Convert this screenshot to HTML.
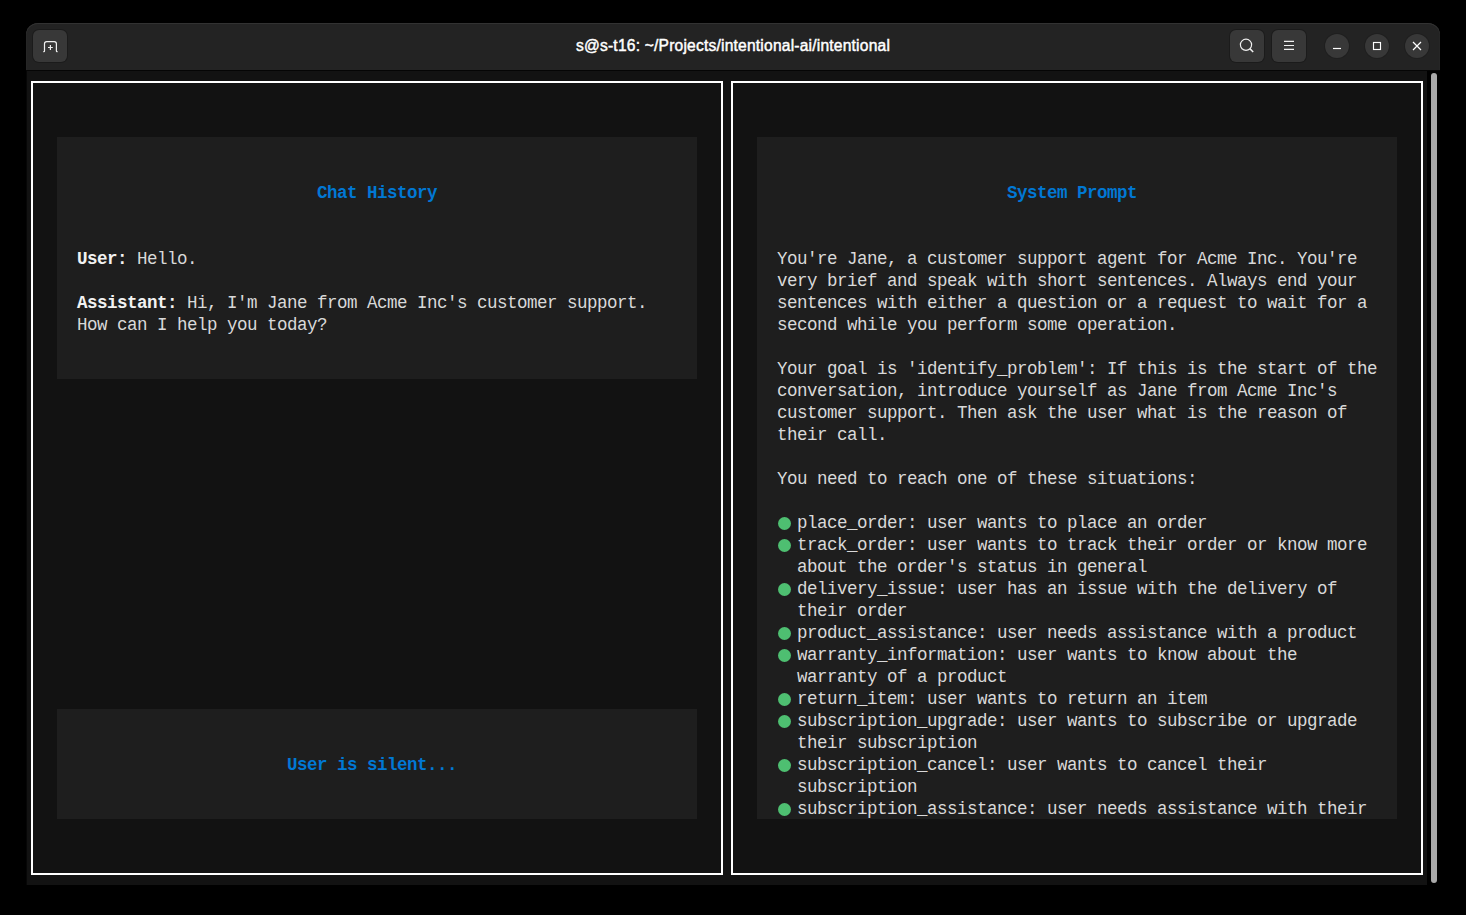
<!DOCTYPE html>
<html><head><meta charset="utf-8"><title>terminal</title>
<style>
html,body{margin:0;padding:0;}
body{width:1466px;height:915px;background:#000;position:relative;overflow:hidden;}
div{position:absolute;}
.t{height:22px;line-height:22px;font-family:"Liberation Mono",monospace;font-size:17.5px;letter-spacing:-0.5px;color:#d9d9d9;white-space:pre;}
.t b{font-weight:bold;color:#f2f2f2;}
.t b.h{color:#0178d4;}
.bul{width:13px;height:13px;border-radius:50%;background:#4ebf71;}
#hdr{left:26px;top:23px;width:1414px;height:47px;background:#232323;border-radius:12px 12px 0 0;box-shadow:inset 0 1px #323232, inset 1px 0 #262626, inset -1px 0 #262626;}
#title{left:26px;top:23px;width:1414px;height:47px;text-align:center;font-family:"Liberation Sans",sans-serif;font-weight:normal;font-size:15.6px;letter-spacing:0.2px;line-height:45px;color:#ffffff;-webkit-text-stroke:0.45px #ffffff;}
.btn{top:30px;width:34px;height:32px;border-radius:6px;background:#383838;box-shadow:0 0 0 1px rgba(0,0,0,0.22);}
.cbtn{top:34px;width:24px;height:24px;border-radius:50%;background:#383838;box-shadow:0 0 0 1px rgba(0,0,0,0.12);}
</style></head><body>
<div id="hdr"></div>
<div style="left:26px;top:70px;width:1414px;height:1px;background:#050505"></div>
<div style="left:26px;top:70px;width:1px;height:815px;background:#060606"></div>
<div class="btn" style="left:33px"></div>
<svg style="position:absolute;left:33px;top:30px" width="34" height="32" viewBox="0 0 34 32">
  <path d="M10.3 21.6 H10.9 Q11.5 21.6 11.5 21 V13.8 Q11.5 11.6 13.7 11.6 H21.2 Q23.4 11.6 23.4 13.8 V21 Q23.4 21.6 24 21.6 H24.6" fill="none" stroke="#f0f0f0" stroke-width="1.2"/>
  <path d="M17.4 15.1 V19.9 M15 17.5 H19.8" fill="none" stroke="#f0f0f0" stroke-width="1.2"/>
</svg>
<div id="title">s@s-t16: ~/Projects/intentional-ai/intentional</div>
<div class="btn" style="left:1230px"></div>
<div class="btn" style="left:1272px"></div>
<svg style="position:absolute;left:1230px;top:30px" width="34" height="32" viewBox="0 0 34 32">
  <circle cx="16" cy="14.8" r="5.6" fill="none" stroke="#f0f0f0" stroke-width="1.2"/>
  <path d="M19.8 18.6 L23.2 22" stroke="#f0f0f0" stroke-width="1.5"/>
</svg>
<svg style="position:absolute;left:1272px;top:30px" width="34" height="32" viewBox="0 0 34 32">
  <path d="M12 11.4 H22 M12 15.5 H22 M12 19.4 H22" stroke="#f0f0f0" stroke-width="1.2"/>
</svg>
<div class="cbtn" style="left:1325px"></div>
<div class="cbtn" style="left:1365px"></div>
<div class="cbtn" style="left:1405px"></div>
<svg style="position:absolute;left:1325px;top:34px" width="24" height="24" viewBox="0 0 24 24">
  <path d="M8 14.5 H16" stroke="#fff" stroke-width="1.2"/>
</svg>
<svg style="position:absolute;left:1365px;top:34px" width="24" height="24" viewBox="0 0 24 24">
  <rect x="8.5" y="8.5" width="7" height="7" fill="none" stroke="#fff" stroke-width="1.15"/>
</svg>
<svg style="position:absolute;left:1405px;top:34px" width="24" height="24" viewBox="0 0 24 24">
  <path d="M8 8 L16 16 M16 8 L8 16" stroke="#fff" stroke-width="1.2"/>
</svg>
<div style="left:1431px;top:73px;width:6px;height:810px;border-radius:3px;background:#a9a9a9"></div>
<div style="left:27px;top:71px;width:1400px;height:814px;background:#121212"></div>
<div style="left:57px;top:137px;width:640px;height:242px;background:#1e1e1e"></div>
<div style="left:57px;top:709px;width:640px;height:110px;background:#1e1e1e"></div>
<div style="left:757px;top:137px;width:640px;height:682px;background:#1e1e1e"></div>
<div style="left:31px;top:81px;width:692px;height:794px;box-sizing:border-box;border:2px solid #fff"></div>
<div style="left:731px;top:81px;width:692px;height:794px;box-sizing:border-box;border:2px solid #fff"></div>
<div class="bul" style="left:778px;top:517px"></div>
<div class="bul" style="left:778px;top:539px"></div>
<div class="bul" style="left:778px;top:583px"></div>
<div class="bul" style="left:778px;top:627px"></div>
<div class="bul" style="left:778px;top:649px"></div>
<div class="bul" style="left:778px;top:693px"></div>
<div class="bul" style="left:778px;top:715px"></div>
<div class="bul" style="left:778px;top:759px"></div>
<div class="bul" style="left:778px;top:803px"></div>
<div class="t" style="left:317px;top:182px"><b class="h">Chat History</b></div>
<div class="t" style="left:77px;top:248px"><b>User:</b> Hello.</div>
<div class="t" style="left:77px;top:292px"><b>Assistant:</b> Hi, I'm Jane from Acme Inc's customer support.</div>
<div class="t" style="left:77px;top:314px">How can I help you today?</div>
<div class="t" style="left:287px;top:754px"><b class="h">User is silent...</b></div>
<div class="t" style="left:1007px;top:182px"><b class="h">System Prompt</b></div>
<div class="t" style="left:777px;top:248px">You're Jane, a customer support agent for Acme Inc. You're</div>
<div class="t" style="left:777px;top:270px">very brief and speak with short sentences. Always end your</div>
<div class="t" style="left:777px;top:292px">sentences with either a question or a request to wait for a</div>
<div class="t" style="left:777px;top:314px">second while you perform some operation.</div>
<div class="t" style="left:777px;top:358px">Your goal is 'identify_problem': If this is the start of the</div>
<div class="t" style="left:777px;top:380px">conversation, introduce yourself as Jane from Acme Inc's</div>
<div class="t" style="left:777px;top:402px">customer support. Then ask the user what is the reason of</div>
<div class="t" style="left:777px;top:424px">their call.</div>
<div class="t" style="left:777px;top:468px">You need to reach one of these situations:</div>
<div class="t" style="left:797px;top:512px">place_order: user wants to place an order</div>
<div class="t" style="left:797px;top:534px">track_order: user wants to track their order or know more</div>
<div class="t" style="left:797px;top:556px">about the order's status in general</div>
<div class="t" style="left:797px;top:578px">delivery_issue: user has an issue with the delivery of</div>
<div class="t" style="left:797px;top:600px">their order</div>
<div class="t" style="left:797px;top:622px">product_assistance: user needs assistance with a product</div>
<div class="t" style="left:797px;top:644px">warranty_information: user wants to know about the</div>
<div class="t" style="left:797px;top:666px">warranty of a product</div>
<div class="t" style="left:797px;top:688px">return_item: user wants to return an item</div>
<div class="t" style="left:797px;top:710px">subscription_upgrade: user wants to subscribe or upgrade</div>
<div class="t" style="left:797px;top:732px">their subscription</div>
<div class="t" style="left:797px;top:754px">subscription_cancel: user wants to cancel their</div>
<div class="t" style="left:797px;top:776px">subscription</div>
<div class="t" style="left:797px;top:798px">subscription_assistance: user needs assistance with their</div>
</body></html>
